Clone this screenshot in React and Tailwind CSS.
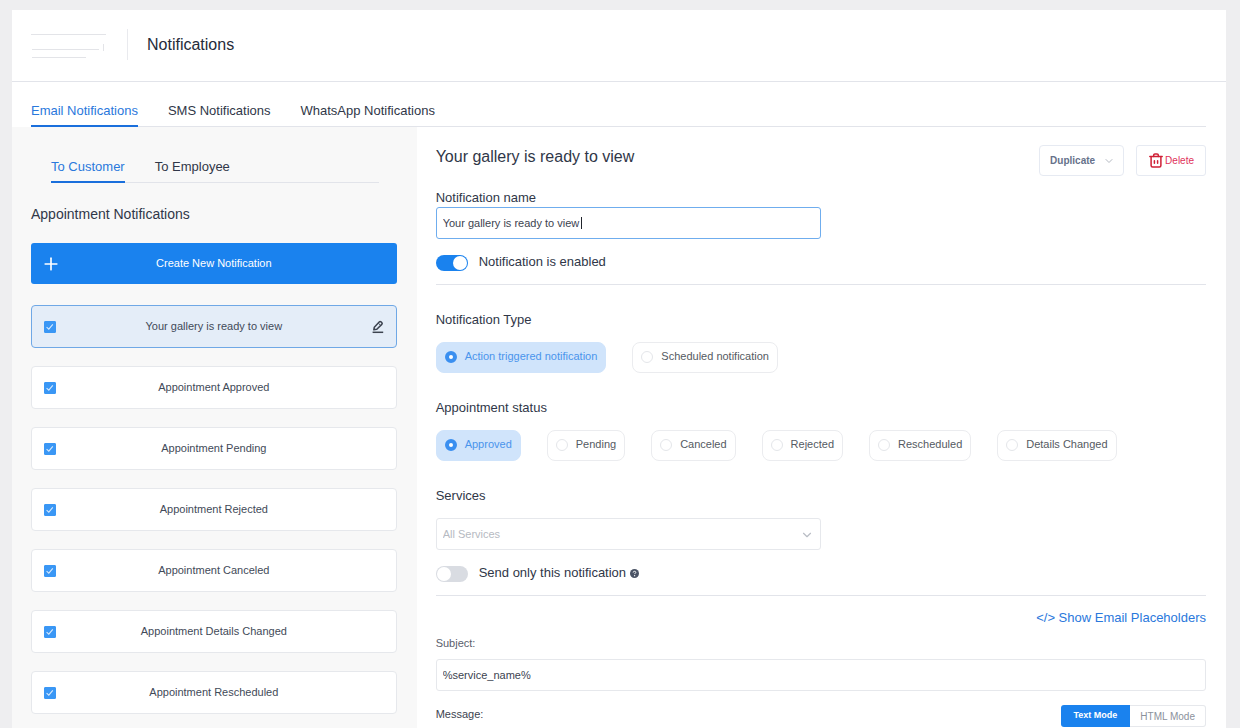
import { useState } from "react"
import { ChevronDown, Plus } from "lucide-react"

const TABS = ["Email Notifications", "SMS Notifications", "WhatsApp Notifications"]
const RECIPIENTS = ["To Customer", "To Employee"]

const NOTIFICATIONS = [
  "Your gallery is ready to view",
  "Appointment Approved",
  "Appointment Pending",
  "Appointment Rejected",
  "Appointment Canceled",
  "Appointment Details Changed",
  "Appointment Rescheduled",
]

const TYPES = ["Action triggered notification", "Scheduled notification"]
const STATUSES = [
  "Approved",
  "Pending",
  "Canceled",
  "Rejected",
  "Rescheduled",
  "Details Changed",
]

function TabNav({ items, label, className }) {
  const [active, setActive] = useState(items[0])

  return (
    <nav
      aria-label={label}
      className={`flex gap-[30px] border-b border-[#e2e4ea] text-[13px] leading-[18px] ${className}`}
    >
      {items.map((item) => (
        <a
          key={item}
          href="#"
          onClick={() => setActive(item)}
          className={
            item === active
              ? "-mb-px border-b-2 border-[#1a6fdc] pb-[5px] text-[#2a78dc]"
              : "-mb-px border-b-2 border-transparent pb-[5px] text-[#303748]"
          }
        >
          {item}
        </a>
      ))}
    </nav>
  )
}

function PencilIcon() {
  return (
    <svg
      viewBox="0 0 12 14"
      className="h-[14px] w-3"
      fill="none"
      stroke="#3c434f"
      strokeWidth="1.5"
      strokeLinejoin="round"
      aria-hidden="true"
    >
      <path d="M1.8 9.8 2.3 7.2 7.2 2a1.3 1.3 0 0 1 1.8-.1l.8.7a1.3 1.3 0 0 1 0 1.8L4.8 9.3z" />
      <path d="M6.4 3.2l2.2 2.1" strokeWidth="1" />
      <path d="M.6 12.3h10.6" />
    </svg>
  )
}

function TrashIcon() {
  return (
    <svg
      viewBox="0 0 14 15"
      className="h-[15px] w-[14px]"
      fill="none"
      stroke="#cf2036"
      strokeWidth="1.5"
      strokeLinecap="round"
      strokeLinejoin="round"
      aria-hidden="true"
    >
      <path d="M.8 3.6h12.4" />
      <path d="M4.7 3.4V2.1a1.2 1.2 0 0 1 1.2-1.2h2.2a1.2 1.2 0 0 1 1.2 1.2v1.3" />
      <path d="M2.1 3.8v8.8a1.5 1.5 0 0 0 1.5 1.5h6.8a1.5 1.5 0 0 0 1.5-1.5V3.8" />
      <path d="M5.4 7.8v2.4M8.6 7.8v2.4" />
    </svg>
  )
}

function NotificationItem({ name, selected }) {
  return (
    <li
      className={
        selected
          ? "relative flex h-[43px] items-center rounded-[4px] border border-[#6fa8e6] bg-[#e4edf8] px-3"
          : "relative flex h-[43px] items-center rounded-[4px] border border-[#e6e8ec] bg-white px-3"
      }
    >
      <label className="flex flex-1 items-center">
        <span className="relative flex">
          <input
            type="checkbox"
            defaultChecked
            className="peer size-3 appearance-none rounded-[1px] border border-[#3a97f5] bg-white checked:bg-[#3a97f5]"
          />
          <svg
            viewBox="0 0 12 12"
            className="pointer-events-none absolute inset-0 hidden size-3 peer-checked:block"
            fill="none"
            stroke="#d8eafd"
            strokeWidth="1.1"
            aria-hidden="true"
          >
            <path d="M2.6 6.2 4.8 8.2l4-4.8" />
          </svg>
        </span>
        <span className="mr-3 flex-1 text-center text-[11px] text-[#424a58]">{name}</span>
      </label>
      {selected && (
        <button type="button" aria-label="Edit" className="absolute right-3">
          <PencilIcon />
        </button>
      )}
    </li>
  )
}

function RadioGroup({ title, name, options }) {
  const [value, setValue] = useState(options[0])

  return (
    <fieldset className="mt-[26px]">
      <legend className="text-[13px] leading-[18px] text-[#303748]">{title}</legend>
      <div className="mt-[13px] flex flex-wrap gap-x-[26px] gap-y-3">
        {options.map((option) => (
          <label
            key={option}
            className={
              option === value
                ? "flex h-[31px] items-center gap-2 rounded-lg border border-[#d0e4fb] bg-[#d0e4fb] px-2 pb-[2px] text-[11px] text-[#4a94ec]"
                : "flex h-[31px] items-center gap-2 rounded-lg border border-[#ebecef] px-2 pb-[2px] text-[11px] text-[#555a62]"
            }
          >
            <input
              type="radio"
              name={name}
              checked={option === value}
              onChange={() => setValue(option)}
              className="size-3 appearance-none rounded-full border border-[#e4e6ea] bg-white checked:border-4 checked:border-[#3a8ff0]"
            />
            {option}
          </label>
        ))}
      </div>
    </fieldset>
  )
}

function Toggle({ defaultChecked, children }) {
  return (
    <label className="flex items-start gap-[11px] text-[13px] leading-[14px] text-[#303748]">
      <input
        type="checkbox"
        role="switch"
        defaultChecked={defaultChecked}
        className="h-4 w-8 appearance-none rounded-full bg-[#d9dce2] p-px before:block before:size-[14px] before:rounded-full before:bg-white checked:bg-[#1a82ee] checked:before:ml-4"
      />
      {children}
    </label>
  )
}

function Sidebar() {
  return (
    <aside className="w-1/3 bg-[#f8f8f8] pt-[31px] pr-5 pb-4 pl-[19px]">
      <TabNav items={RECIPIENTS} label="Recipient" className="mr-[18px] ml-5" />
      <h2 className="mt-[21px] text-[14px] leading-5 text-[#303748]">
        Appointment Notifications
      </h2>
      <button
        type="button"
        className="relative mt-[19px] flex h-[41px] w-full items-center justify-center rounded-[3px] bg-[#1a82ee] text-[11px] text-white"
      >
        <Plus className="absolute left-[10px] size-5" strokeWidth={2} />
        Create New Notification
      </button>
      <ul className="mt-[21px] flex flex-col gap-[18px]">
        {NOTIFICATIONS.map((name, idx) => (
          <NotificationItem key={name} name={name} selected={idx === 0} />
        ))}
      </ul>
    </aside>
  )
}

function Editor() {
  const [title, setTitle] = useState(NOTIFICATIONS[0])

  return (
    <main className="flex-1 pt-[18px] pr-5 pl-[19px]">
      <div className="flex items-start">
        <h2 className="flex-1 text-[16px] leading-6 text-[#303748]">{NOTIFICATIONS[0]}</h2>
        <button
          type="button"
          className="flex h-[31px] items-center gap-2 rounded-[4px] border border-[#e6eaf2] pr-2 pl-[10px] text-[10px] font-bold text-[#66718a]"
        >
          Duplicate
          <ChevronDown className="size-3 text-[#b4b9c2]" strokeWidth={2} />
        </button>
        <button
          type="button"
          className="ml-3 flex h-[31px] items-center gap-[2px] rounded-[3px] border border-[#e6eaf2] pr-[11px] pl-3 text-[10px] text-[#e0315a]"
        >
          <TrashIcon />
          Delete
        </button>
      </div>

      <label
        htmlFor="notification-name"
        className="mt-[13px] block text-[13px] leading-[18px] text-[#303748]"
      >
        Notification name
      </label>
      <div className="relative w-1/2">
        <input
          id="notification-name"
          type="text"
          value={title}
          onChange={(e) => setTitle(e.target.value)}
          className="h-8 w-full rounded-[3px] border border-[#6fadee] px-[6px] text-[11px] text-[#3c4350] outline-none"
        />
        <span className="absolute top-[10px] left-[145px] h-3 w-px bg-[#20242c]" />
      </div>
      <div className="mt-4">
        <Toggle defaultChecked>Notification is enabled</Toggle>
      </div>
      <hr className="mt-[13px] border-[#e2e4ea]" />

      <RadioGroup title="Notification Type" name="type" options={TYPES} />
      <RadioGroup title="Appointment status" name="status" options={STATUSES} />

      <label
        htmlFor="services"
        className="mt-[26px] block text-[13px] leading-[18px] text-[#303748]"
      >
        Services
      </label>
      <div className="relative mt-[13px] w-1/2">
        <select
          id="services"
          className="block h-8 w-full appearance-none rounded-[3px] border border-[#e6e8ec] bg-white px-[6px] text-[11px] text-[#b6bac2]"
        >
          <option>All Services</option>
        </select>
        <ChevronDown
          className="pointer-events-none absolute top-[10px] right-[7px] size-[14px] text-[#b9bdc5]"
          strokeWidth={2}
        />
      </div>
      <div className="mt-4">
        <Toggle>
          <span className="flex items-center gap-1">
            Send only this notification
            <svg viewBox="0 0 9 9" className="size-[9px]" aria-hidden="true">
              <circle cx="4.5" cy="4.5" r="4.5" fill="#4a5365" />
              <path
                d="M3.2 3.5c0-.8.6-1.2 1.3-1.2s1.3.4 1.3 1.1c0 .8-1.2.9-1.2 1.7"
                fill="none"
                stroke="#fff"
                strokeWidth="1"
              />
              <circle cx="4.6" cy="6.7" r=".65" fill="#fff" />
            </svg>
          </span>
        </Toggle>
      </div>
      <hr className="mt-[13px] border-[#e2e4ea]" />

      <div className="mt-[13px] flex justify-end">
        <a href="#" className="text-[13px] leading-[18px] text-[#2a78dc]">
          &lt;/&gt; Show Email Placeholders
        </a>
      </div>
      <label
        htmlFor="subject"
        className="mt-[7px] block text-[11px] leading-[18px] text-[#5a606c]"
      >
        Subject:
      </label>
      <input
        id="subject"
        type="text"
        defaultValue="%service_name%"
        className="mt-[7px] block h-8 w-full rounded-[3px] border border-[#e6e8ec] px-[6px] text-[11px] text-[#3c4350]"
      />
      <div className="mt-[14px] flex items-start justify-between">
        <label htmlFor="message" className="text-[11px] leading-[18px] text-[#3c4350]">
          Message:
        </label>
        <div className="flex h-[22px]">
          <button
            type="button"
            className="rounded-l-[3px] bg-[#1a82ee] px-[13px] text-[9px] font-bold text-white"
          >
            Text Mode
          </button>
          <button
            type="button"
            className="rounded-r-[3px] border border-l-0 border-[#e6e8ec] px-[10px] text-[10px] text-[#8b919c]"
          >
            HTML Mode
          </button>
        </div>
      </div>
      <textarea
        id="message"
        rows={8}
        className="mt-2 block w-full rounded-[3px] border border-[#e6e8ec] px-[6px] text-[11px] text-[#3c4350]"
      />
    </main>
  )
}

export default function App() {
  return (
    <div className="flex h-screen flex-col overflow-hidden bg-[#eeeef0] pt-[10px] pr-[14px] pl-3 font-['Liberation_Sans',Arial,sans-serif]">
      <div className="flex flex-1 flex-col bg-white">
        <header className="flex h-[72px] items-center border-b border-[#e2e4ea] pb-[2px] pl-[19px]">
          <svg
            viewBox="0 0 76 26"
            className="h-[26px] w-[76px]"
            fill="none"
            stroke="#e3e4e8"
            aria-hidden="true"
          >
            <path d="M0 2.5h75M1 17.5h67M1 25.5h54M72.5 12v7" />
          </svg>
          <div className="ml-5 h-[31px] border-l border-[#e9eaee]" />
          <h1 className="ml-[19px] text-[16px] leading-6 text-[#252b3a]">Notifications</h1>
        </header>
        <TabNav items={TABS} label="Channel" className="mr-5 ml-[19px] pt-5" />
        <div className="flex flex-1">
          <Sidebar />
          <Editor />
        </div>
      </div>
    </div>
  )
}
